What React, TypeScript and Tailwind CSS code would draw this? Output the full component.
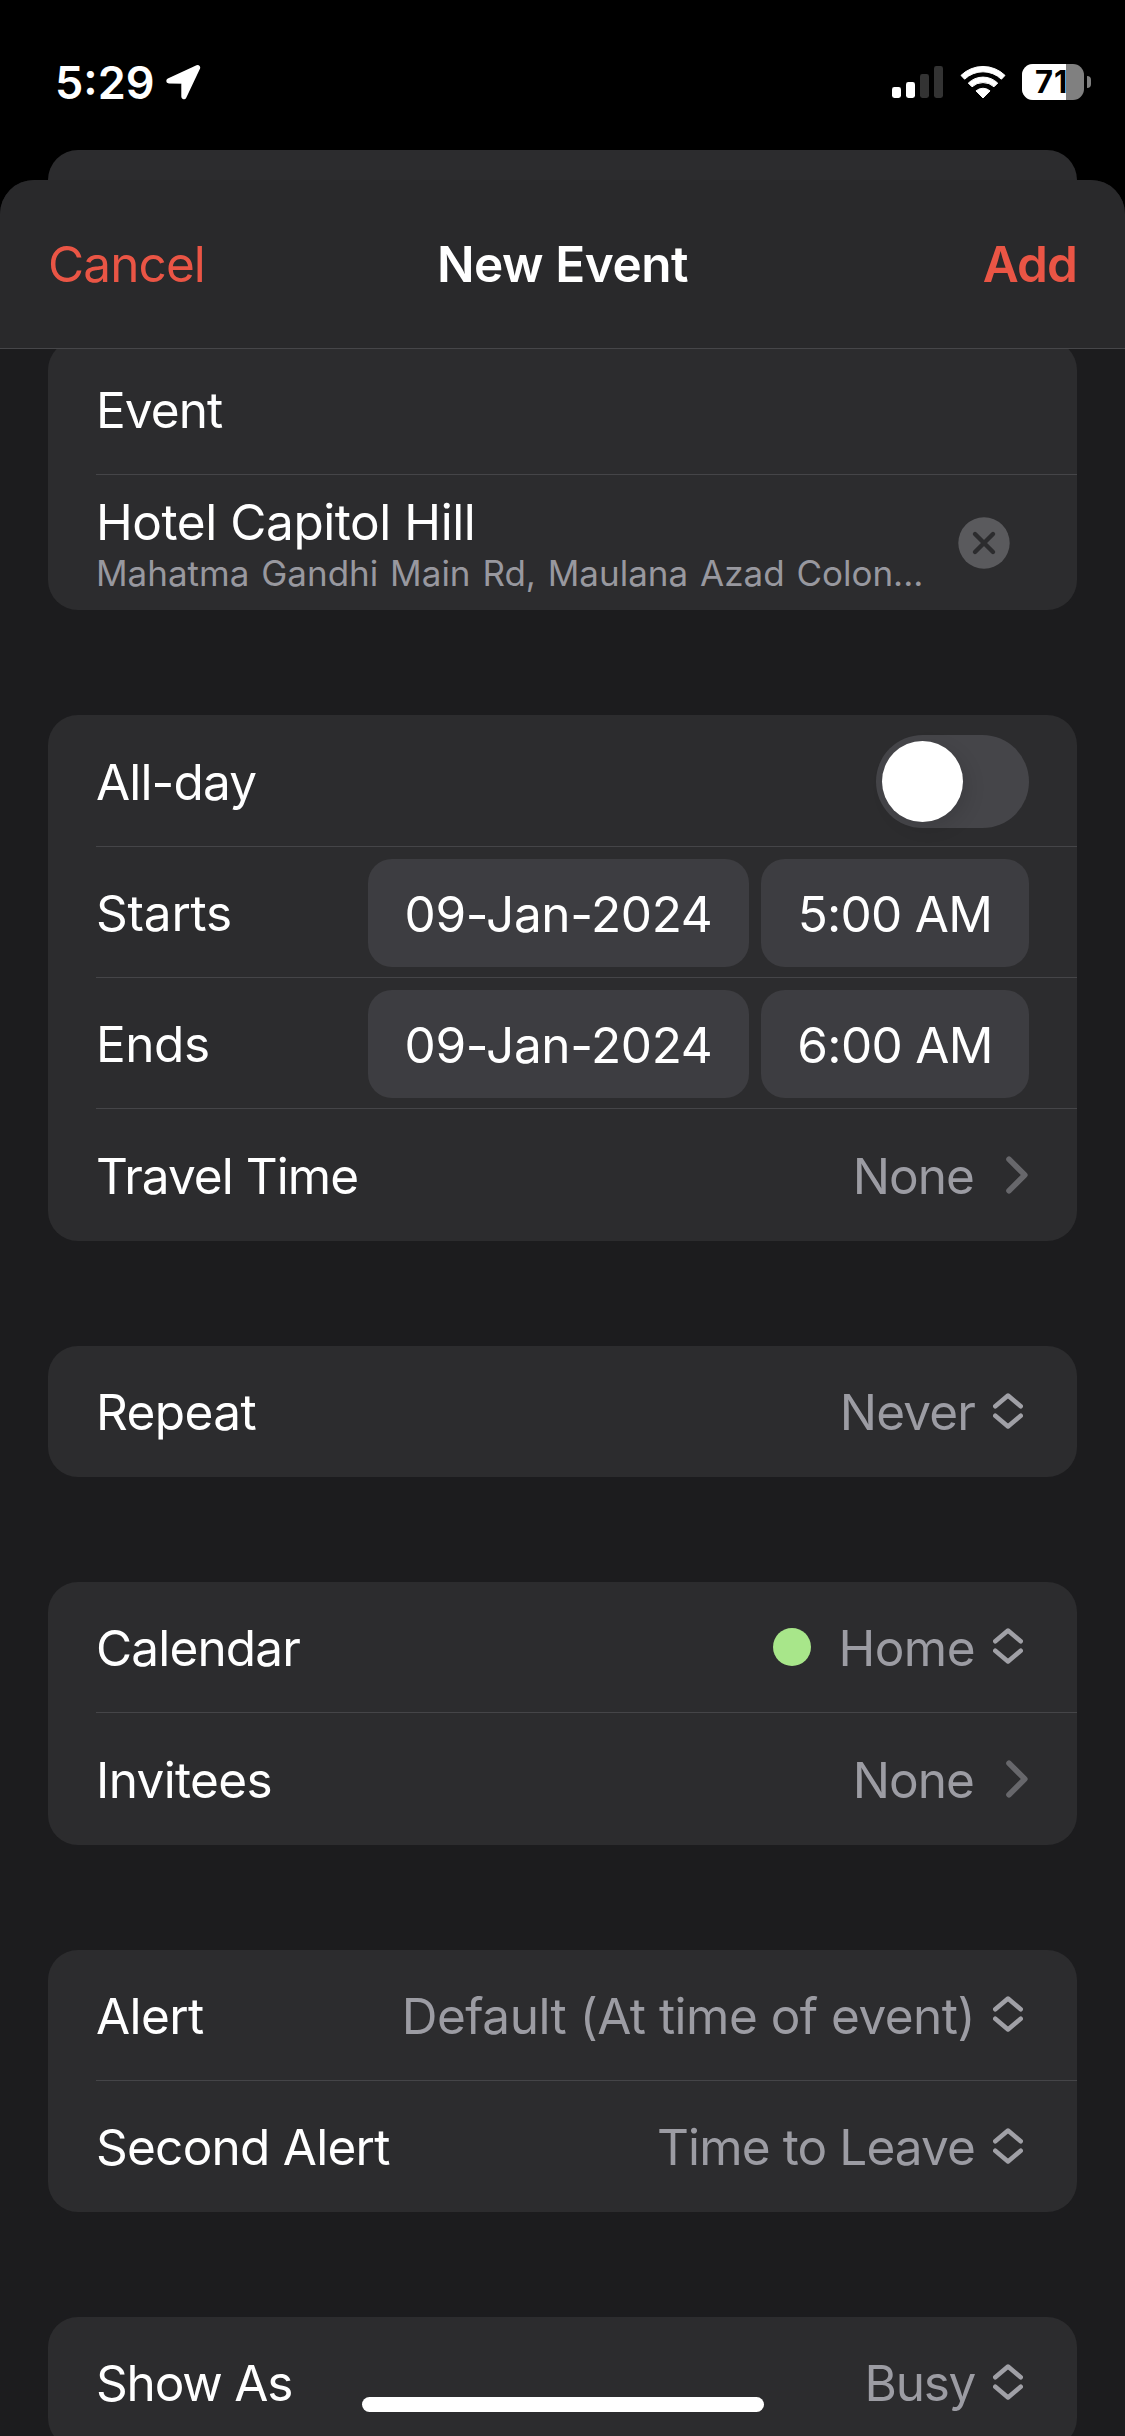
import type { ReactNode } from "react";

function LocationArrow() {
  return (
    <svg width="35" height="35" viewBox="0 0 35 35" className="shrink-0">
      <path d="M2.9 15.8 31.6 2.7 17.9 31.6V16.1Z" fill="#fff" stroke="#fff" strokeWidth="5.2" strokeLinejoin="round" />
    </svg>
  );
}

function Signal() {
  return (
    <svg width="51" height="32" viewBox="0 0 51 32" className="shrink-0">
      <rect x="0" y="21" width="9" height="11" rx="2.4" fill="#fff" />
      <rect x="14" y="16" width="9" height="16" rx="2.4" fill="#fff" />
      <rect x="28" y="8" width="9" height="24" rx="2.4" fill="#333" />
      <rect x="42" y="0" width="9" height="32" rx="2.4" fill="#333" />
    </svg>
  );
}

function Wifi() {
  return (
    <svg width="46" height="34" viewBox="0 0 46 34" className="shrink-0">
      <g fill="#fff" stroke="#fff" strokeWidth="1" strokeLinejoin="round">
        <path d="M1 10.4A31.5 31.5 0 0 1 45 10.4L41.4 14.2A26.6 26.6 0 0 0 4.6 14.2Z" />
        <path d="M8.3 18.1A21 21 0 0 1 37.7 18.1L34 21.8A16.4 16.4 0 0 0 12 21.8Z" />
        <path d="M16 25.9A10.6 10.6 0 0 1 30 25.9L23 33Z" />
      </g>
    </svg>
  );
}

function Battery() {
  return (
    <div className="flex shrink-0 items-center gap-[3px]">
      <div className="relative h-9 w-[62px] overflow-hidden rounded-[11px] bg-[#808080]">
        <div className="h-full w-11 bg-white" />
        <span className="absolute inset-y-0 left-[13px] text-[31px] leading-9 font-bold tracking-[1px] text-black">71</span>
      </div>
      <div className="h-3 w-1 rounded-r-full bg-[#808080]" />
    </div>
  );
}

function StatusBar() {
  return (
    <div className="flex h-[150px] items-center justify-between pt-[14px] pr-[34px] pl-[55px]">
      <div className="flex items-center gap-3">
        <span className="text-[45px] leading-none font-semibold">5:29</span>
        <LocationArrow />
      </div>
      <div className="flex items-center">
        <Signal />
        <div className="ml-[17px]">
          <Wifi />
        </div>
        <div className="ml-4">
          <Battery />
        </div>
      </div>
    </div>
  );
}

function Chevron() {
  return (
    <svg width="22" height="38" viewBox="0 0 22 38" className="mr-px ml-8 shrink-0">
      <path d="M3 3.2 18.8 19 3 34.8" fill="none" stroke="#67676b" strokeWidth="5.6" strokeLinecap="round" strokeLinejoin="round" />
    </svg>
  );
}

function UpDown() {
  return (
    <svg width="30" height="38" viewBox="0 0 30 38" className="mr-[6px] mb-[2px] ml-[18px] shrink-0">
      <path
        d="M2.3 14.2 15 3.6 27.7 14.2M2.3 23.8 15 34.4 27.7 23.8"
        fill="none"
        stroke="#a0a0a6"
        strokeWidth="4.6"
        strokeLinecap="round"
        strokeLinejoin="round"
      />
    </svg>
  );
}

function Card({ children, className = "" }: { children: ReactNode; className?: string }) {
  return <section className={`overflow-hidden rounded-[30px] bg-[#2c2c2e] pl-12 ${className}`}>{children}</section>;
}

function Row({
  label,
  track,
  height = "h-[131px]",
  pad = "pt-[2px]",
  last = false,
  children,
}: {
  label: string;
  track: string;
  height?: string;
  pad?: string;
  last?: boolean;
  children?: ReactNode;
}) {
  return (
    <div className={`flex items-center justify-between pr-12 ${height} ${last ? "" : "border-b border-[#454548]"}`}>
      <span className={`whitespace-nowrap ${pad} ${track}`}>{label}</span>
      <div className="flex items-center">{children}</div>
    </div>
  );
}

function Value({ children, track, pad = "pt-[2px]" }: { children: ReactNode; track: string; pad?: string }) {
  return <span className={`whitespace-nowrap text-[#9c9ca3] ${pad} ${track}`}>{children}</span>;
}

function DateTime({ date, time }: { date: string; time: string }) {
  return (
    <div className="mt-[2px] flex gap-3">
      <div className="flex h-[108px] w-[381px] items-center justify-center rounded-[24px] bg-[#3d3d41] pt-px tracking-[-0.35px]">{date}</div>
      <div className="flex h-[108px] w-[268px] items-center justify-center rounded-[24px] bg-[#3d3d41] pt-px tracking-[-0.7px]">{time}</div>
    </div>
  );
}

export default function App() {
  return (
    <div className="relative flex h-[2436px] w-[1125px] flex-col overflow-hidden bg-black font-[Inter,sans-serif] text-[49.5px] leading-[60px] text-white">
      <StatusBar />
      <div className="mx-12 -mb-10 h-[70px] shrink-0 rounded-t-[30px] bg-[#2c2c2e]" />

      <div className="relative flex min-h-0 flex-1 flex-col overflow-hidden rounded-t-[34px] bg-[#1c1c1e]">
        <header className="relative z-10 grid h-[169px] shrink-0 grid-cols-[1fr_auto_1fr] items-center border-b border-[#464649] bg-[#29292b] px-12">
          <span className="tracking-[-0.9px] text-[#ea5545]">Cancel</span>
          <span className="font-semibold tracking-[-0.45px]">New Event</span>
          <span className="text-right font-semibold tracking-[-0.9px] text-[#ea5545]">Add</span>
        </header>

        <main className="-mt-[9px] flex flex-col gap-[105px] px-12">
          <Card>
            <Row label="Event" pad="pt-[5px]" track="tracking-[-0.9px]" height="h-[135px]" />
            <div className="flex h-[135px] items-center pr-[67px]">
              <div className="flex flex-1 flex-col pt-px">
                <span className="tracking-[-0.44px]">Hotel Capitol Hill</span>
                <span className="text-[35px] leading-[43px] [word-spacing:2px] text-[#98989f]">
                  Mahatma Gandhi Main Rd, Maulana Azad Colon...
                </span>
              </div>
              <svg width="52" height="52" viewBox="0 0 52 52" className="mt-px shrink-0">
                <circle cx="26" cy="26" r="25.7" fill="#5a5a5d" />
                <path d="M17 17 35 35M35 17 17 35" stroke="#2c2c2e" strokeWidth="4.4" strokeLinecap="round" />
              </svg>
            </div>
          </Card>

          <Card>
            <Row label="All-day" track="tracking-[-0.85px]" height="h-[132px]">
              <div className="mt-[2px] flex h-[93px] w-[153px] items-center rounded-full bg-[#454549] pl-1.5">
                <div className="size-[81px] rounded-full bg-white shadow-[6px_6px_18px_rgba(0,0,0,0.1)]" />
              </div>
            </Row>
            <Row label="Starts" track="tracking-[-0.2px]">
              <DateTime date="09-Jan-2024" time="5:00 AM" />
            </Row>
            <Row label="Ends" track="tracking-[-0.47px]">
              <DateTime date="09-Jan-2024" time="6:00 AM" />
            </Row>
            <Row label="Travel Time" track="tracking-[-0.96px]" height="h-[132px]" last>
              <Value track="tracking-[-0.94px]">None</Value>
              <Chevron />
            </Row>
          </Card>

          <Card>
            <Row label="Repeat" pad="pt-0" track="tracking-[-0.6px]" last>
              <Value pad="pt-0" track="tracking-[-0.85px]">Never</Value>
              <UpDown />
            </Row>
          </Card>

          <Card>
            <Row label="Calendar" track="tracking-[-0.85px]">
              <div className="mr-[27px] size-[38px] rounded-full bg-[#a8e68a]" />
              <Value track="tracking-[-0.54px]">Home</Value>
              <UpDown />
            </Row>
            <Row label="Invitees" track="tracking-[-0.66px]" height="h-[132px]" last>
              <Value track="tracking-[-0.94px]">None</Value>
              <Chevron />
            </Row>
          </Card>

          <Card>
            <Row label="Alert" track="tracking-[-0.6px]">
              <Value track="tracking-[-0.52px]">Default (At time of event)</Value>
              <UpDown />
            </Row>
            <Row label="Second Alert" pad="pt-0" track="tracking-[-0.75px]" last>
              <Value pad="pt-0" track="tracking-[-0.89px]">Time to Leave</Value>
              <UpDown />
            </Row>
          </Card>

          <Card>
            <Row label="Show As" pad="pt-0" track="tracking-[-1.2px]" last>
              <Value pad="pt-0" track="tracking-[-1.3px]">Busy</Value>
              <UpDown />
            </Row>
          </Card>
        </main>
      </div>

      <div className="absolute bottom-6 left-[362px] h-[15px] w-[402px] rounded-full bg-white" />
    </div>
  );
}
